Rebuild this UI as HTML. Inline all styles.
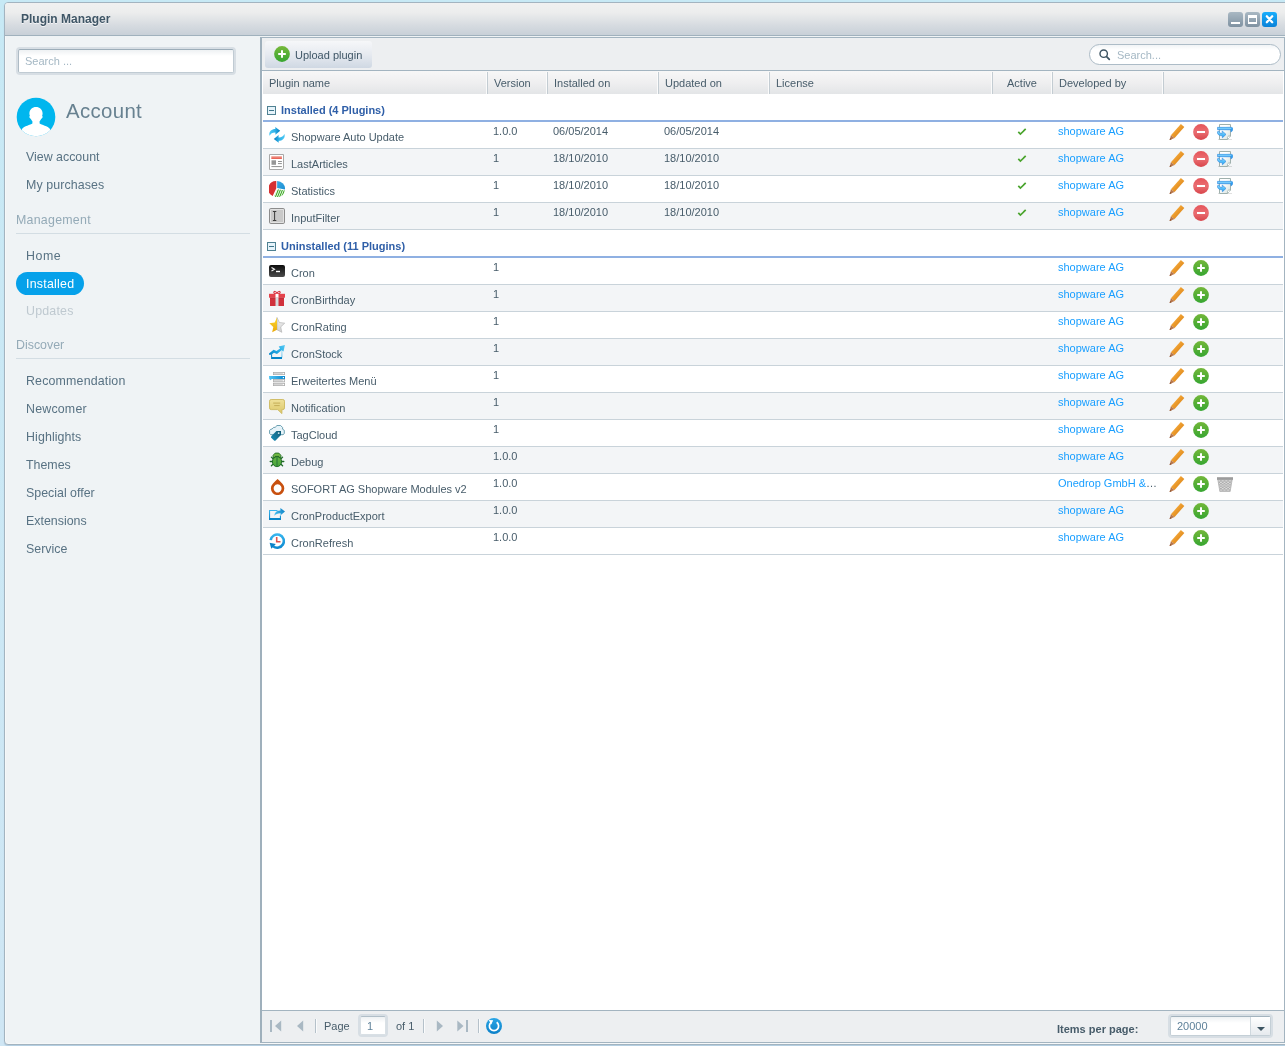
<!DOCTYPE html>
<html>
<head>
<meta charset="utf-8">
<title>Plugin Manager</title>
<style>
*{box-sizing:border-box;margin:0;padding:0}
html,body{width:1285px;height:1046px;overflow:hidden}
body{font-family:"Liberation Sans",sans-serif;font-size:11px;color:#475c6a;position:relative;
 background:linear-gradient(to bottom,#c7e9f5 0,#cfe6f4 100%)}
.abs{position:absolute}
#win,#sb,#panel{will-change:transform}
#sb{position:absolute;left:0;top:0;width:260px;height:1046px}
/* window */
#win{position:absolute;left:4px;top:2px;width:1290px;height:1043px;border:1px solid #a3b4c0;border-radius:4px;background:#eff3f5;box-shadow:inset 1px 0 0 #f6f8f9,inset 0 -1px 0 #f6f8f9,0 1px 1px rgba(110,145,180,.3)}
#hdr{position:absolute;left:0;top:0;right:0;height:33px;border-bottom:1px solid #a0b1bd;border-radius:3px 3px 0 0;
 background:linear-gradient(to bottom,#f1f1f1 0,#eceded 30%,#d6dbe0 70%,#c8d0d8 100%)}
#title{position:absolute;left:16px;top:9px;font-weight:bold;font-size:12px;color:#3f5666;text-shadow:0 1px 0 rgba(255,255,255,.7);white-space:nowrap}
.tbtn{position:absolute;top:12px;width:15px;height:15px;border-radius:3px}
/* sidebar text */
.sb{position:absolute;white-space:nowrap;color:#587283;font-size:12.4px;line-height:16px}
.sbh{position:absolute;white-space:nowrap;color:#94aab7;font-size:12.4px;line-height:16px}
.sbl{position:absolute;left:16px;width:234px;height:1px;background:#d3dde3}
/* panel */
#panel{position:absolute;left:260px;top:37px;width:1025px;height:1006px;border:1px solid #a3b4c0;border-left:2px solid #9fb0bc;background:#fff}
#tb{position:absolute;left:0;top:0;right:0;height:33px;background:#edeff1;border-bottom:1px solid #a3b4c0}
#ch{position:absolute;left:0;top:33px;right:0;height:23px;background:linear-gradient(to bottom,#f7f7f7 0,#efeff0 50%,#e3e5e7 100%)}
.hc{position:absolute;top:1px;height:22px;border-right:1px solid #c3ccd2;line-height:23px;padding-left:6px;color:#475c6a;white-space:nowrap}
.hc:before{content:"";position:absolute;right:0;top:0;bottom:0;width:1px;background:#fbfbfb}
.gh{position:absolute;left:0;right:0;height:28px;border-bottom:2px solid #8fb0e2;background:#fff}
.gh b{position:absolute;left:19px;top:10px;font-size:11px;line-height:13px;color:#2f5fa8;white-space:nowrap}
.gt{position:absolute;left:5px;top:12px;width:9px;height:9px;border:1px solid #4f8192;background:#e6f3fa}
.gt:after{content:"";position:absolute;left:1px;top:3px;width:5px;height:1px;background:#3d7488}
.row{position:absolute;left:0;right:0;height:27px;border-bottom:1px solid #c9d3da;background:#fff}
.row.alt{background:#f3f5f7}
.row span{position:absolute;white-space:nowrap;line-height:13px;top:3px}
.row .n{left:29px;top:9px}
.row .v{left:231px}
.row .i{left:291px}
.row .u{left:402px}
.row .d{left:796px;width:101px;overflow:hidden;text-overflow:ellipsis}
.row .d a{color:#189eff}
.row svg{position:absolute}
.ic{left:7px;top:5px}
.ck{left:752px;top:4px}
.a1{left:907px;top:2px}
.a2{left:931px;top:2px}
.a3{left:955px;top:2px}
#pg{position:absolute;left:0;right:0;bottom:0;height:32px;background:#edeff1;border-top:1px solid #a3b4c0}
</style>
</head>
<body>
<div id="win">
 <div id="hdr">
  <div id="title">Plugin Manager</div>
  <div class="tbtn" style="left:1223px;top:9px;background:linear-gradient(#a9b8c3,#7f92a1)"><i style="position:absolute;left:3px;top:10px;width:9px;height:2px;background:#fff"></i></div>
  <div class="tbtn" style="left:1240px;top:9px;background:linear-gradient(#a9b8c3,#7f92a1)"><i style="position:absolute;left:3px;top:3px;width:9px;height:9px;border:1px solid #fff;border-top-width:3px;border-bottom-width:2px"></i></div>
  <div class="tbtn" style="left:1257px;top:9px;background:linear-gradient(#19aefc,#0a82d8)"><svg width="15" height="15" viewBox="0 0 15 15" style="position:absolute;left:0;top:0"><path d="M4.800 4.300l5.400 5.900M10.200 4.300l-5.400 5.900" stroke="#fff" stroke-width="2.300" stroke-linecap="round"/></svg></div>
 </div>
</div>
<div id="sb">
 <div class="abs" style="left:16px;top:47px;width:220px;height:28px;border:2px solid #d7dee4;border-radius:4px">
  <div class="abs" style="left:0;top:0;right:0;bottom:0;border:1px solid #c0cbd3;border-top-color:#9cadb9;border-left-color:#adbbc5;border-radius:2px;background:linear-gradient(#eef1f3 0,#fff 6px);"></div>
  <div class="abs" style="left:7px;top:6px;font-size:11px;line-height:13px;color:#a5b8c4">Search ...</div>
 </div>
 <svg class="abs" style="left:16px;top:97px" width="40" height="40" viewBox="0 0 40 40">
  <defs><clipPath id="avc"><circle cx="20" cy="20" r="19.3"/></clipPath></defs>
  <circle cx="20" cy="20" r="19.3" fill="#00b6ee"/>
  <g clip-path="url(#avc)" fill="#fff">
   <path d="M20 10c3.6 0 6.6 2.6 6.6 6.4 0 1-.2 1.700-.5 2.300.6.300.7 1.300.1 2.400-.3.500-.7.800-1.100.900-.400.900-.900 1.700-1.500 2.300v2.200c1.800 1.400 8.400 2.600 10.400 5.500v9H6v-9c2-2.900 8.600-4.100 10.400-5.500v-2.200c-.6-.6-1.100-1.400-1.500-2.300-.4-.1-.8-.4-1.100-.9-.6-1.100-.5-2.100.1-2.400-.3-.6-.5-1.300-.5-2.300 0-3.800 3-6.400 6.600-6.400z"/>
  </g>
 </svg>
 <div class="abs" style="left:66px;top:97px;font-size:20.4px;line-height:28px;color:#678190;letter-spacing:.35px;white-space:nowrap">Account</div>
 <div class="sb" style="left:26px;top:149px">View account</div>
 <div class="sb" style="left:26px;top:177px;letter-spacing:0.1px">My purchases</div>
 <div class="sbh" style="left:16px;top:212px;letter-spacing:0.25px">Management</div>
 <div class="sbl" style="top:233px"></div>
 <div class="sb" style="left:26px;top:248px;letter-spacing:0.55px">Home</div>
 <div class="abs" style="left:16px;top:272px;width:68px;height:23px;border-radius:12px;background:#06a1ea"></div>
 <div class="sb" style="left:26px;top:276px;color:#fff;letter-spacing:.25px">Installed</div>
 <div class="sb" style="left:26px;top:303px;color:#bfc9d0;letter-spacing:.2px">Updates</div>
 <div class="sbh" style="left:16px;top:337px">Discover</div>
 <div class="sbl" style="top:358px"></div>
 <div class="sb" style="left:26px;top:373px;letter-spacing:.17px">Recommendation</div>
 <div class="sb" style="left:26px;top:401px;letter-spacing:.2px">Newcomer</div>
 <div class="sb" style="left:26px;top:429px;letter-spacing:0.1px">Highlights</div>
 <div class="sb" style="left:26px;top:457px">Themes</div>
 <div class="sb" style="left:26px;top:485px">Special offer</div>
 <div class="sb" style="left:26px;top:513px">Extensions</div>
 <div class="sb" style="left:26px;top:541px">Service</div>
</div>
<!--PANEL_START-->
<div id="panel">
 <div id="tb">
  <div class="abs" style="left:3px;top:3px;width:107px;height:27px;border-radius:3px;background:linear-gradient(#f6f7f9 0,#e6eaf0 50%,#cfd8e3 100%)">
   <svg class="abs" style="left:9px;top:5px" width="16" height="16" viewBox="0 0 16 16"><defs><linearGradient id="gp0" x1="0" y1="0" x2="0" y2="1"><stop offset="0" stop-color="#76b83b"/><stop offset="1" stop-color="#37a631"/></linearGradient></defs><circle cx="8" cy="8" r="7.900" fill="url(#gp0)"/><path d="M8 4.200v7.600M4.200 8h7.600" stroke="#fff" stroke-width="2"/></svg>
   <div class="abs" style="left:30px;top:8px;line-height:13px;font-size:11px;color:#3f5666;white-space:nowrap">Upload plugin</div>
  </div>
  <div class="abs" style="left:827px;top:6px;width:192px;height:21px;border:1px solid #adbcc7;border-radius:11px;background:linear-gradient(#f1f4f6 0,#fff 5px)">
   <svg class="abs" style="left:9px;top:4px" width="12" height="12" viewBox="0 0 12 12"><circle cx="4.700" cy="4.700" r="3.700" fill="none" stroke="#3d5462" stroke-width="1.400"/><path d="M7.600 7.600l2.700 2.700" stroke="#3d5462" stroke-width="1.700" stroke-linecap="round"/></svg>
   <div class="abs" style="left:27px;top:4px;line-height:13px;font-size:11px;color:#a5b8c4">Search...</div>
  </div>
 </div>
 <div id="ch">
  <div class="hc" style="left:0px;width:226px;padding-left:7px;">Plugin name</div>
  <div class="hc" style="left:226px;width:60px;">Version</div>
  <div class="hc" style="left:286px;width:111px;">Installed on</div>
  <div class="hc" style="left:397px;width:111px;">Updated on</div>
  <div class="hc" style="left:508px;width:223px;">License</div>
  <div class="hc" style="left:731px;width:60px;text-align:center;padding-left:0;padding-right:1px;">Active</div>
  <div class="hc" style="left:791px;width:111px;">Developed by</div>
 </div>
 <div class="gh" style="top:56px"><i class="gt"></i><b>Installed (4 Plugins)</b></div>
 <div class="row" style="top:84px"><svg class="ic" width="16" height="16" viewBox="0 0 16 16"><defs><linearGradient id="gu" gradientUnits="userSpaceOnUse" x1="1" y1="0" x2="11" y2="0"><stop offset="0" stop-color="#49c6f4"/><stop offset=".5" stop-color="#2fb0e6"/><stop offset="1" stop-color="#057dc2"/></linearGradient></defs><path d="M6.300 0L11.200 3.700 6.400 7.800V5.400C3.500 5.300 1.600 6.500.6 8.800-.6 5.500 2 2.100 6.300 2.100z" fill="url(#gu)"/><g transform="rotate(180 8 7.900)"><path d="M6.300 0L11.200 3.700 6.400 7.800V5.400C3.500 5.300 1.600 6.500.6 8.800-.6 5.500 2 2.100 6.300 2.100z" fill="url(#gu)"/></g></svg><span class="n">Shopware Auto Update</span><span class="v">1.0.0</span><span class="i">06/05/2014</span><span class="u">06/05/2014</span><svg class="ck" width="16" height="16" viewBox="0 0 16 16"><path d="M4.300 5.900l2.100 2.200 5.300-5.200" fill="none" stroke="#4aa42d" stroke-width="1.700"/></svg><span class="d"><a>shopware AG</a></span><svg class="a1" width="16" height="16" viewBox="0 0 16 16"><defs><linearGradient id="gpc" x1="0" y1="0" x2="1" y2="1"><stop offset=".3" stop-color="#f4a83a"/><stop offset=".7" stop-color="#e08a1c"/></linearGradient></defs><path d="M11.900 0L15.300 2.900 5.600 14 1.900 11.300z" fill="url(#gpc)"/><path d="M1.900 11.300L5.600 14 .6 16.100z" fill="#b9784c"/><path d="M1.100 14L2.700 15.200.6 16.100z" fill="#8a5232"/></svg><svg class="a2" width="16" height="16" viewBox="0 0 16 16"><defs><linearGradient id="gm" x1="0" y1="0" x2="0" y2="1"><stop offset="0" stop-color="#e5545a"/><stop offset=".5" stop-color="#ea6e72"/><stop offset="1" stop-color="#d8454b"/></linearGradient></defs><circle cx="8" cy="8" r="7.900" fill="url(#gm)"/><rect x="4" y="7" width="8" height="2" fill="#fff"/></svg><svg class="a3" width="16" height="16" viewBox="0 0 16 16"><defs><linearGradient id="grd" x1="0" y1="0" x2="1" y2="1"><stop offset=".35" stop-color="#fff"/><stop offset="1" stop-color="#d3dfdc"/></linearGradient><linearGradient id="gra" x1="0" y1="0" x2="0" y2="1"><stop offset="0" stop-color="#8fdcff"/><stop offset="1" stop-color="#18a2f6"/></linearGradient></defs><rect x="1" y="15" width="14" height="1" fill="#000" opacity=".12"/><path d="M2.500.5h11v11.500l-3 3.500h-8z" fill="url(#grd)" stroke="#9fb0ad"/><path d="M13.300 12.200c-1.200-.6-2.600-.2-2.700 1.200l-.2 2" fill="#e9f0ee" stroke="#9fb0ad" stroke-width=".8"/><circle cx="11.600" cy="13.400" r=".7" fill="#fff"/><path d="M.5 3.300h13.700c1.200 0 1.700.7 1.700 1.700 0 1.400-.700 2.500-2 3V5.800H.5z" fill="#2e9df0" stroke="#3a8fe0" stroke-width=".5"/><path d="M1 4.300h13.300" stroke="#86d8ff" stroke-width="1"/><path d="M.4 8.100C.4 7 2.600 7 2.600 8.100c0 .9.600 1.300 2.600 1.300V7L9 10.400l-3.600 3.400v-2C2 11.800.4 10.500.4 8.100z" fill="url(#gra)" stroke="#3a8fe0" stroke-width=".7"/></svg></div>
 <div class="row alt" style="top:111px"><svg class="ic" width="16" height="16" viewBox="0 0 16 16"><defs><linearGradient id="gar" x1="0" y1="0" x2="0" y2="1"><stop offset="0" stop-color="#f0a095"/><stop offset="1" stop-color="#e6594c"/></linearGradient></defs><path d="M.5.500h14v13.500l-1 1.500H.5z" fill="#fff" stroke="#a8a8a8"/><rect x="2.300" y="2.200" width="10.600" height="2.800" fill="url(#gar)"/><rect x="2.500" y="6.300" width="4.500" height="4.500" fill="#969696"/><path d="M9 7.500h3.900M9 9.600h3.900M2.400 12.600h10.500" stroke="#909090" stroke-width="1"/></svg><span class="n">LastArticles</span><span class="v">1</span><span class="i">18/10/2010</span><span class="u">18/10/2010</span><svg class="ck" width="16" height="16" viewBox="0 0 16 16"><path d="M4.300 5.900l2.100 2.200 5.300-5.200" fill="none" stroke="#4aa42d" stroke-width="1.700"/></svg><span class="d"><a>shopware AG</a></span><svg class="a1" width="16" height="16" viewBox="0 0 16 16"><path d="M11.900 0L15.300 2.900 5.600 14 1.900 11.300z" fill="url(#gpc)"/><path d="M1.900 11.300L5.600 14 .6 16.100z" fill="#b9784c"/><path d="M1.100 14L2.700 15.200.6 16.100z" fill="#8a5232"/></svg><svg class="a2" width="16" height="16" viewBox="0 0 16 16"><circle cx="8" cy="8" r="7.900" fill="url(#gm)"/><rect x="4" y="7" width="8" height="2" fill="#fff"/></svg><svg class="a3" width="16" height="16" viewBox="0 0 16 16"><rect x="1" y="15" width="14" height="1" fill="#000" opacity=".12"/><path d="M2.500.5h11v11.500l-3 3.500h-8z" fill="url(#grd)" stroke="#9fb0ad"/><path d="M13.300 12.200c-1.200-.6-2.600-.2-2.700 1.200l-.2 2" fill="#e9f0ee" stroke="#9fb0ad" stroke-width=".8"/><circle cx="11.600" cy="13.400" r=".7" fill="#fff"/><path d="M.5 3.300h13.700c1.200 0 1.700.7 1.700 1.700 0 1.400-.700 2.500-2 3V5.800H.5z" fill="#2e9df0" stroke="#3a8fe0" stroke-width=".5"/><path d="M1 4.300h13.300" stroke="#86d8ff" stroke-width="1"/><path d="M.4 8.100C.4 7 2.600 7 2.600 8.100c0 .9.600 1.300 2.600 1.300V7L9 10.400l-3.600 3.400v-2C2 11.800.4 10.500.4 8.100z" fill="url(#gra)" stroke="#3a8fe0" stroke-width=".7"/></svg></div>
 <div class="row" style="top:138px"><svg class="ic" width="16" height="16" viewBox="0 0 16 16"><defs><clipPath id="pg1"><path d="M8.500 8.200L16 9.600A7.800 7.800 0 0 1 5 15.400z"/></clipPath><linearGradient id="gsb" x1="0" y1="0" x2="1" y2="1"><stop offset="0" stop-color="#3aa9e2"/><stop offset="1" stop-color="#1b8fd4"/></linearGradient></defs><path d="M7.300 0V7.300L3.700 15A7.900 7.900 0 0 1 7.300 0z" fill="#d63031"/><path d="M8.100 0A7.900 7.900 0 0 1 16 8.600L8.100 7.100z" fill="url(#gsb)"/><g clip-path="url(#pg1)" stroke="#43ad2c" stroke-width="1.150"><path d="M3.500 18l4-10M5.600 18l4-10M7.700 18l4-10M9.800 18l4-10M11.900 18l4-10M14 18l4-10"/></g></svg><span class="n">Statistics</span><span class="v">1</span><span class="i">18/10/2010</span><span class="u">18/10/2010</span><svg class="ck" width="16" height="16" viewBox="0 0 16 16"><path d="M4.300 5.900l2.100 2.200 5.300-5.200" fill="none" stroke="#4aa42d" stroke-width="1.700"/></svg><span class="d"><a>shopware AG</a></span><svg class="a1" width="16" height="16" viewBox="0 0 16 16"><path d="M11.900 0L15.300 2.900 5.600 14 1.900 11.300z" fill="url(#gpc)"/><path d="M1.900 11.300L5.600 14 .6 16.100z" fill="#b9784c"/><path d="M1.100 14L2.700 15.200.6 16.100z" fill="#8a5232"/></svg><svg class="a2" width="16" height="16" viewBox="0 0 16 16"><circle cx="8" cy="8" r="7.900" fill="url(#gm)"/><rect x="4" y="7" width="8" height="2" fill="#fff"/></svg><svg class="a3" width="16" height="16" viewBox="0 0 16 16"><rect x="1" y="15" width="14" height="1" fill="#000" opacity=".12"/><path d="M2.500.5h11v11.500l-3 3.500h-8z" fill="url(#grd)" stroke="#9fb0ad"/><path d="M13.300 12.200c-1.200-.6-2.600-.2-2.700 1.200l-.2 2" fill="#e9f0ee" stroke="#9fb0ad" stroke-width=".8"/><circle cx="11.600" cy="13.400" r=".7" fill="#fff"/><path d="M.5 3.300h13.700c1.200 0 1.700.7 1.700 1.700 0 1.400-.700 2.500-2 3V5.800H.5z" fill="#2e9df0" stroke="#3a8fe0" stroke-width=".5"/><path d="M1 4.300h13.300" stroke="#86d8ff" stroke-width="1"/><path d="M.4 8.100C.4 7 2.600 7 2.600 8.100c0 .9.600 1.300 2.600 1.300V7L9 10.400l-3.600 3.400v-2C2 11.800.4 10.500.4 8.100z" fill="url(#gra)" stroke="#3a8fe0" stroke-width=".7"/></svg></div>
 <div class="row alt" style="top:165px"><svg class="ic" width="16" height="16" viewBox="0 0 16 16"><rect x=".5" y=".5" width="15" height="15" rx="1.200" fill="#c9c9c9" stroke="#8c8c8c"/><rect x="1.500" y="1.500" width="13" height="13" rx=".5" fill="none" stroke="#e2e2e2" stroke-width="1"/><path d="M3.900 3.500h3.400M3.900 12.500h3.400M5.600 3.500v9" stroke="#3c3c3c" stroke-width="1"/></svg><span class="n">InputFilter</span><span class="v">1</span><span class="i">18/10/2010</span><span class="u">18/10/2010</span><svg class="ck" width="16" height="16" viewBox="0 0 16 16"><path d="M4.300 5.900l2.100 2.200 5.300-5.200" fill="none" stroke="#4aa42d" stroke-width="1.700"/></svg><span class="d"><a>shopware AG</a></span><svg class="a1" width="16" height="16" viewBox="0 0 16 16"><path d="M11.900 0L15.300 2.900 5.600 14 1.900 11.300z" fill="url(#gpc)"/><path d="M1.900 11.300L5.600 14 .6 16.100z" fill="#b9784c"/><path d="M1.100 14L2.700 15.200.6 16.100z" fill="#8a5232"/></svg><svg class="a2" width="16" height="16" viewBox="0 0 16 16"><circle cx="8" cy="8" r="7.900" fill="url(#gm)"/><rect x="4" y="7" width="8" height="2" fill="#fff"/></svg></div>
 <div class="gh" style="top:192px"><i class="gt"></i><b>Uninstalled (11 Plugins)</b></div>
 <div class="row" style="top:220px"><svg class="ic" width="16" height="16" viewBox="0 0 16 16"><defs><linearGradient id="gt" x1="0" y1="0" x2="0" y2="1"><stop offset="0" stop-color="#0c0c0c"/><stop offset="1" stop-color="#4c4c4c"/></linearGradient></defs><rect x="0" y="2" width="16" height="12" rx="2" fill="url(#gt)"/><path d="M2.500 4.500l3 1.700-3 1.700" fill="none" stroke="#f2f2f2" stroke-width="1.150"/><path d="M7 8.500h4" stroke="#fff" stroke-width="1.400"/></svg><span class="n">Cron</span><span class="v">1</span><span class="d"><a>shopware AG</a></span><svg class="a1" width="16" height="16" viewBox="0 0 16 16"><path d="M11.900 0L15.300 2.900 5.600 14 1.900 11.300z" fill="url(#gpc)"/><path d="M1.900 11.300L5.600 14 .6 16.100z" fill="#b9784c"/><path d="M1.100 14L2.700 15.200.6 16.100z" fill="#8a5232"/></svg><svg class="a2" width="16" height="16" viewBox="0 0 16 16"><defs><linearGradient id="gp" x1="0" y1="0" x2="0" y2="1"><stop offset="0" stop-color="#73b73a"/><stop offset="1" stop-color="#37a631"/></linearGradient></defs><circle cx="8" cy="8" r="7.900" fill="url(#gp)"/><path d="M8 4.200v7.600M4.200 8h7.600" stroke="#fff" stroke-width="2"/></svg></div>
 <div class="row alt" style="top:247px"><svg class="ic" width="16" height="16" viewBox="0 0 16 16"><path d="M4.800 2.600c0-1.700 2.300-1.600 3.200.6.900-2.200 3.200-2.300 3.200-.6 0 1.300-2.200 1.200-3.200.6-1 .6-3.200.7-3.200-.6z" fill="none" stroke="#d9333f" stroke-width="1.100"/><rect x="0" y="3.800" width="16" height="3.900" fill="#e5424b"/><rect x="1" y="7.700" width="14" height="8.300" fill="#d0303b"/><rect x="1" y="7.700" width="14" height=".7" fill="#b82a34"/><rect x="6.500" y="3.800" width="3" height="3.900" fill="#fff"/><rect x="6.500" y="7.700" width="3" height="8.300" fill="#d5dadc"/></svg><span class="n">CronBirthday</span><span class="v">1</span><span class="d"><a>shopware AG</a></span><svg class="a1" width="16" height="16" viewBox="0 0 16 16"><path d="M11.900 0L15.300 2.900 5.600 14 1.900 11.300z" fill="url(#gpc)"/><path d="M1.900 11.300L5.600 14 .6 16.100z" fill="#b9784c"/><path d="M1.100 14L2.700 15.200.6 16.100z" fill="#8a5232"/></svg><svg class="a2" width="16" height="16" viewBox="0 0 16 16"><circle cx="8" cy="8" r="7.900" fill="url(#gp)"/><path d="M8 4.200v7.600M4.200 8h7.600" stroke="#fff" stroke-width="2"/></svg></div>
 <div class="row" style="top:274px"><svg class="ic" width="16" height="16" viewBox="0 0 16 16"><defs><linearGradient id="gs" x1="0" y1="0" x2="0" y2="1"><stop offset="0" stop-color="#fbd630"/><stop offset="1" stop-color="#e9a90c"/></linearGradient><linearGradient id="gs2" x1="0" y1="0" x2="0" y2="1"><stop offset="0" stop-color="#f6f6f6"/><stop offset="1" stop-color="#d0d0d0"/></linearGradient></defs><path d="M8 .5l2.300 5 5.400.700-4 3.700 1.100 5.400L8 12.700z" fill="url(#gs2)" stroke="#b5b5b5" stroke-width=".7"/><path d="M8 .5L5.700 5.500.3 6.200l4 3.700-1.100 5.400L8 12.700z" fill="url(#gs)"/></svg><span class="n">CronRating</span><span class="v">1</span><span class="d"><a>shopware AG</a></span><svg class="a1" width="16" height="16" viewBox="0 0 16 16"><path d="M11.900 0L15.300 2.900 5.600 14 1.900 11.300z" fill="url(#gpc)"/><path d="M1.900 11.300L5.600 14 .6 16.100z" fill="#b9784c"/><path d="M1.100 14L2.700 15.200.6 16.100z" fill="#8a5232"/></svg><svg class="a2" width="16" height="16" viewBox="0 0 16 16"><circle cx="8" cy="8" r="7.900" fill="url(#gp)"/><path d="M8 4.200v7.600M4.200 8h7.600" stroke="#fff" stroke-width="2"/></svg></div>
 <div class="row alt" style="top:301px"><svg class="ic" width="16" height="16" viewBox="0 0 16 16"><defs><linearGradient id="gk" gradientUnits="userSpaceOnUse" x1="1" y1="12" x2="15" y2="2"><stop offset="0" stop-color="#0787ca"/><stop offset=".5" stop-color="#22a7e2"/><stop offset="1" stop-color="#4cc4f2"/></linearGradient><linearGradient id="gk2" x1="0" y1="0" x2="0" y2="1"><stop offset="0" stop-color="#bfe6f6"/><stop offset="1" stop-color="#8fd0ee"/></linearGradient></defs><rect x="12.100" y="7" width="1.500" height="6.500" fill="url(#gk2)"/><path d="M2.100 10.500V14.900H13V13H3.100V10z" fill="#0585c8"/><path d="M15.900 1L9.700 2.500 11.100 4.400 7.500 6.900 4.600 5.700 0 9.600V10.700H2.300L5 8.800 8 10.100 12.600 6.300 14.500 7.400z" fill="url(#gk)"/></svg><span class="n">CronStock</span><span class="v">1</span><span class="d"><a>shopware AG</a></span><svg class="a1" width="16" height="16" viewBox="0 0 16 16"><path d="M11.900 0L15.300 2.900 5.600 14 1.900 11.300z" fill="url(#gpc)"/><path d="M1.900 11.300L5.600 14 .6 16.100z" fill="#b9784c"/><path d="M1.100 14L2.700 15.200.6 16.100z" fill="#8a5232"/></svg><svg class="a2" width="16" height="16" viewBox="0 0 16 16"><circle cx="8" cy="8" r="7.900" fill="url(#gp)"/><path d="M8 4.200v7.600M4.200 8h7.600" stroke="#fff" stroke-width="2"/></svg></div>
 <div class="row" style="top:328px"><svg class="ic" width="16" height="16" viewBox="0 0 16 16"><defs><linearGradient id="gmn" x1="0" y1="0" x2="1" y2="0"><stop offset="0" stop-color="#52c5f4"/><stop offset="1" stop-color="#0987ce"/></linearGradient></defs><g fill="#d4d4d4" stroke="#a3a3a3" stroke-width=".6"><rect x="4.300" y="1.300" width="11.400" height="2.400"/><rect x="4.300" y="8.500" width="11.400" height="2.400"/><rect x="4.300" y="12.200" width="11.400" height="2.500"/></g><path d="M0 5h16v3H2.800L1.500 9.300.2 8z" fill="url(#gmn)"/><g fill="#fff"><rect x="13.800" y="2" width="1.200" height="1"/><rect x="13.800" y="6" width="1.200" height="1.200"/><rect x="13.800" y="9.200" width="1.200" height="1"/><rect x="13.800" y="13" width="1.200" height="1"/></g></svg><span class="n">Erweitertes Menü</span><span class="v">1</span><span class="d"><a>shopware AG</a></span><svg class="a1" width="16" height="16" viewBox="0 0 16 16"><path d="M11.900 0L15.300 2.900 5.600 14 1.900 11.300z" fill="url(#gpc)"/><path d="M1.900 11.300L5.600 14 .6 16.100z" fill="#b9784c"/><path d="M1.100 14L2.700 15.200.6 16.100z" fill="#8a5232"/></svg><svg class="a2" width="16" height="16" viewBox="0 0 16 16"><circle cx="8" cy="8" r="7.900" fill="url(#gp)"/><path d="M8 4.200v7.600M4.200 8h7.600" stroke="#fff" stroke-width="2"/></svg></div>
 <div class="row alt" style="top:355px"><svg class="ic" width="16" height="16" viewBox="0 0 16 16"><defs><linearGradient id="gn" x1="0" y1="0" x2="0" y2="1"><stop offset="0" stop-color="#efe19a"/><stop offset="1" stop-color="#dcc768"/></linearGradient></defs><path d="M2.200 1.500h11.600a1.700 1.700 0 0 1 1.700 1.700v6.700a1.700 1.700 0 0 1-1.700 1.700H12.900V15.600L8.700 11.600H2.200A1.700 1.700 0 0 1 .5 9.900V3.200A1.700 1.700 0 0 1 2.200 1.500z" fill="url(#gn)" stroke="#cdb95e" stroke-width=".9"/><path d="M4.200 5.100h7M5.200 7.600h5.500" stroke="#c4ae58" stroke-width="1"/></svg><span class="n">Notification</span><span class="v">1</span><span class="d"><a>shopware AG</a></span><svg class="a1" width="16" height="16" viewBox="0 0 16 16"><path d="M11.900 0L15.300 2.900 5.600 14 1.900 11.300z" fill="url(#gpc)"/><path d="M1.900 11.300L5.600 14 .6 16.100z" fill="#b9784c"/><path d="M1.100 14L2.700 15.200.6 16.100z" fill="#8a5232"/></svg><svg class="a2" width="16" height="16" viewBox="0 0 16 16"><circle cx="8" cy="8" r="7.900" fill="url(#gp)"/><path d="M8 4.200v7.600M4.200 8h7.600" stroke="#fff" stroke-width="2"/></svg></div>
 <div class="row" style="top:382px"><svg class="ic" width="16" height="16" viewBox="0 0 16 16"><defs><linearGradient id="gtg" gradientUnits="userSpaceOnUse" x1="3" y1="13" x2="12" y2="6"><stop offset="0" stop-color="#1585ad"/><stop offset=".6" stop-color="#176e8e"/><stop offset="1" stop-color="#0b546f"/></linearGradient></defs><path d="M8 .5h3.600l2 2v1.700l1.700 1.100v3.300l-1.300 1.100H1.800L.6 8.600V5.300l1.200-1 1.300-.3 1.500-1.600h1.500z" fill="#e6f3f9" stroke="#5b95a8" stroke-width=".9" stroke-linejoin="round"/><path d="M7.400 5.900H12v4.200L6.300 15.800h-1L2 12.600v-1z" fill="url(#gtg)"/><circle cx="9.700" cy="8.100" r=".95" fill="#d7edf3"/></svg><span class="n">TagCloud</span><span class="v">1</span><span class="d"><a>shopware AG</a></span><svg class="a1" width="16" height="16" viewBox="0 0 16 16"><path d="M11.900 0L15.300 2.900 5.600 14 1.900 11.300z" fill="url(#gpc)"/><path d="M1.900 11.300L5.600 14 .6 16.100z" fill="#b9784c"/><path d="M1.100 14L2.700 15.200.6 16.100z" fill="#8a5232"/></svg><svg class="a2" width="16" height="16" viewBox="0 0 16 16"><circle cx="8" cy="8" r="7.900" fill="url(#gp)"/><path d="M8 4.200v7.600M4.200 8h7.600" stroke="#fff" stroke-width="2"/></svg></div>
 <div class="row alt" style="top:409px"><svg class="ic" width="16" height="16" viewBox="0 0 16 16"><defs><linearGradient id="gb" x1="0" y1="0" x2="0" y2="1"><stop offset="0" stop-color="#68b443"/><stop offset="1" stop-color="#44a53a"/></linearGradient></defs><g stroke="#1f6b28" stroke-width="1.300" stroke-linecap="round" fill="none"><path d="M4 6.800L2.400 5.100M3.800 9.500H1.200M4 12.200l-1.600 1.500M12 6.800l1.600-1.700M12.200 9.500h2.600M12 12.200l1.600 1.500"/></g><path d="M6.200 1.100h3.600l2.100 2.200v2.200H4.100V3.300z" fill="#73b843" stroke="#1f6b24" stroke-width=".9" stroke-linejoin="round"/><path d="M5.800 4.400h4.400" stroke="#226a28" stroke-width="1"/><ellipse cx="8" cy="9.700" rx="4.600" ry="4.950" fill="url(#gb)" stroke="#1a6420" stroke-width=".9"/><rect x="7.200" y="5.200" width="1.600" height="9.200" fill="#37883a"/></svg><span class="n">Debug</span><span class="v">1.0.0</span><span class="d"><a>shopware AG</a></span><svg class="a1" width="16" height="16" viewBox="0 0 16 16"><path d="M11.900 0L15.300 2.900 5.600 14 1.900 11.300z" fill="url(#gpc)"/><path d="M1.900 11.300L5.600 14 .6 16.100z" fill="#b9784c"/><path d="M1.100 14L2.700 15.200.6 16.100z" fill="#8a5232"/></svg><svg class="a2" width="16" height="16" viewBox="0 0 16 16"><circle cx="8" cy="8" r="7.900" fill="url(#gp)"/><path d="M8 4.200v7.600M4.200 8h7.600" stroke="#fff" stroke-width="2"/></svg></div>
 <div class="row" style="top:436px"><svg class="ic" width="16" height="16" viewBox="0 0 16 16"><path fill-rule="evenodd" d="M8.600 0Q11.300 2.300 13.400 4.700A6.700 6.700 0 1 1 3.800 4.700Q5.900 2.300 8.600 0zM8.600 5.300a3.900 4.100 0 1 0 .01 0z" fill="#c8500f"/></svg><span class="n">SOFORT AG Shopware Modules v2</span><span class="v">1.0.0</span><span class="d"><a>Onedrop GmbH &amp; Co. KG</a></span><svg class="a1" width="16" height="16" viewBox="0 0 16 16"><path d="M11.900 0L15.300 2.900 5.600 14 1.900 11.300z" fill="url(#gpc)"/><path d="M1.900 11.300L5.600 14 .6 16.100z" fill="#b9784c"/><path d="M1.100 14L2.700 15.200.6 16.100z" fill="#8a5232"/></svg><svg class="a2" width="16" height="16" viewBox="0 0 16 16"><circle cx="8" cy="8" r="7.900" fill="url(#gp)"/><path d="M8 4.200v7.600M4.200 8h7.600" stroke="#fff" stroke-width="2"/></svg><svg class="a3" width="16" height="16" viewBox="0 0 16 16"><defs><pattern id="bp" width="3.600" height="2.600" patternUnits="userSpaceOnUse" x="1.200" y="4.300"><rect width="3.600" height="2.600" fill="#ababab"/><ellipse cx=".9" cy=".65" rx=".85" ry=".55" fill="#f2f2f2"/><ellipse cx="2.700" cy="1.950" rx=".85" ry=".55" fill="#f2f2f2"/></pattern></defs><path d="M.9 3.800h14.200l-2 11.800H2.900z" fill="url(#bp)"/><path d="M.9 3.800l2 11.800M15.100 3.800l-2 11.800M2.900 15.400h10.200" stroke="#b4b4b4" stroke-width=".9" fill="none"/><rect x="0" y="1.200" width="16" height="2.700" fill="#9c9c9c"/><rect x="0" y="1.200" width="16" height=".8" fill="#b0b0b0"/></svg></div>
 <div class="row alt" style="top:463px"><svg class="ic" width="16" height="16" viewBox="0 0 16 16"><defs><linearGradient id="ge" gradientUnits="userSpaceOnUse" x1="5" y1="10" x2="16" y2="4"><stop offset="0" stop-color="#55c9f5"/><stop offset="1" stop-color="#0a80c6"/></linearGradient><linearGradient id="ge2" x1="0" y1="0" x2="0" y2="1"><stop offset="0" stop-color="#3ab4ec"/><stop offset="1" stop-color="#0a86c8"/></linearGradient></defs><path d="M8.500 4.550H.55V13M11.450 9.500V13" fill="none" stroke="url(#ge2)" stroke-width="1.100"/><rect x="0" y="12" width="12" height="2" fill="#0a86c8"/><path d="M5.200 9.800C5.600 6.500 8 4.600 11.400 4.600V2L16.100 5.500 11.600 9.200V7.200C8.800 7.100 6.800 8 5.200 9.800z" fill="url(#ge)"/></svg><span class="n">CronProductExport</span><span class="v">1.0.0</span><span class="d"><a>shopware AG</a></span><svg class="a1" width="16" height="16" viewBox="0 0 16 16"><path d="M11.900 0L15.300 2.900 5.600 14 1.900 11.300z" fill="url(#gpc)"/><path d="M1.900 11.300L5.600 14 .6 16.100z" fill="#b9784c"/><path d="M1.100 14L2.700 15.200.6 16.100z" fill="#8a5232"/></svg><svg class="a2" width="16" height="16" viewBox="0 0 16 16"><circle cx="8" cy="8" r="7.900" fill="url(#gp)"/><path d="M8 4.200v7.600M4.200 8h7.600" stroke="#fff" stroke-width="2"/></svg></div>
 <div class="row" style="top:490px"><svg class="ic" width="16" height="16" viewBox="0 0 16 16"><defs><linearGradient id="grr" x1="0" y1="0" x2="0" y2="1"><stop offset="0" stop-color="#35b4ee"/><stop offset="1" stop-color="#0f8ad0"/></linearGradient></defs><path d="M1.700 7.200A6.600 6.600 0 1 1 4.100 13.200" fill="none" stroke="url(#grr)" stroke-width="2.600"/><path d="M.6 9.800l6.200 1.100-4.500 4.800z" fill="#0b82c8"/><path d="M7.700 4v4.700h3.800" fill="none" stroke="#e0524c" stroke-width="1.600"/></svg><span class="n">CronRefresh</span><span class="v">1.0.0</span><span class="d"><a>shopware AG</a></span><svg class="a1" width="16" height="16" viewBox="0 0 16 16"><path d="M11.900 0L15.300 2.900 5.600 14 1.900 11.300z" fill="url(#gpc)"/><path d="M1.900 11.300L5.600 14 .6 16.100z" fill="#b9784c"/><path d="M1.100 14L2.700 15.200.6 16.100z" fill="#8a5232"/></svg><svg class="a2" width="16" height="16" viewBox="0 0 16 16"><circle cx="8" cy="8" r="7.900" fill="url(#gp)"/><path d="M8 4.200v7.600M4.200 8h7.600" stroke="#fff" stroke-width="2"/></svg></div>
 <div id="pg">
  <svg class="abs" style="left:4px;top:4px" width="250" height="24" viewBox="0 0 250 24">
   <g fill="#a9b8c3"><rect x="4" y="5" width="2" height="12"/><path d="M15.200 5.500v11L9 11z"/><path d="M37.200 5.500v11L31 11z"/>
   <path d="M170.800 5.500v11L177 11z"/><path d="M191.300 5.500v11l6.200-5.500z"/><rect x="200" y="5" width="2" height="12"/></g>
   <g fill="#b5c1ca"><rect x="49" y="4" width="1" height="14"/><rect x="157" y="4" width="1" height="14"/><rect x="212" y="4" width="1" height="14"/></g>
   <g fill="#fafbfc"><rect x="50" y="4" width="1" height="14"/><rect x="158" y="4" width="1" height="14"/><rect x="213" y="4" width="1" height="14"/></g>
   <defs><linearGradient id="grf" x1="0" y1="0" x2="0" y2="1"><stop offset="0" stop-color="#2aa6e6"/><stop offset="1" stop-color="#0c80c8"/></linearGradient></defs>
   <circle cx="228" cy="11" r="8" fill="url(#grf)"/>
   <path d="M225.300 7.300A4.600 4.600 0 1 0 230.700 7.300" fill="none" stroke="#fff" stroke-width="1.700"/><path d="M222.800 5l4.400.3-2 4.200z" fill="#fff"/>
  </svg>
  <div class="abs" style="left:62px;top:9px;line-height:13px;white-space:nowrap">Page</div>
  <div class="abs" style="left:96px;top:3px;width:30px;height:23px;border:2px solid #d7dee4;border-radius:4px">
   <div class="abs" style="left:0;top:0;right:0;bottom:0;border:1px solid #d9e0e5;border-top-color:#b0bec8;border-radius:2px;background:linear-gradient(#eef1f3 0,#fff 6px)"></div>
   <div class="abs" style="left:7px;top:4px;line-height:13px;color:#5e8199">1</div>
  </div>
  <div class="abs" style="left:134px;top:9px;line-height:13px;white-space:nowrap">of 1</div>
  <div class="abs" style="left:795px;top:12px;line-height:13px;font-weight:bold;white-space:nowrap">Items per page:</div>
  <div class="abs" style="left:906px;top:3px;width:105px;height:24px;border:2px solid #d7dee4;border-radius:4px">
   <div class="abs" style="left:0;top:0;right:0;bottom:0;border:1px solid #c4cfd6;border-top-color:#a3b3be;border-radius:2px;background:linear-gradient(#eef1f3 0,#fff 6px)"></div>
   <div class="abs" style="left:80px;top:1px;width:20px;bottom:1px;border-left:1px solid #cfd8de;background:linear-gradient(#fff,#e6eaee)"></div>
   <div class="abs" style="left:87px;top:11px;width:0;height:0;border:4px solid transparent;border-top:4px solid #3d5462"></div>
   <div class="abs" style="left:7px;top:4px;line-height:13px;color:#5e8199">20000</div>
  </div>
 </div>
 <div class="abs" style="left:0;top:33px;width:1px;bottom:32px;background:#fff"></div><div class="abs" style="right:0;top:33px;width:1px;bottom:32px;background:#fff"></div>
</div>
<!--PANEL_END-->
</body>
</html>
